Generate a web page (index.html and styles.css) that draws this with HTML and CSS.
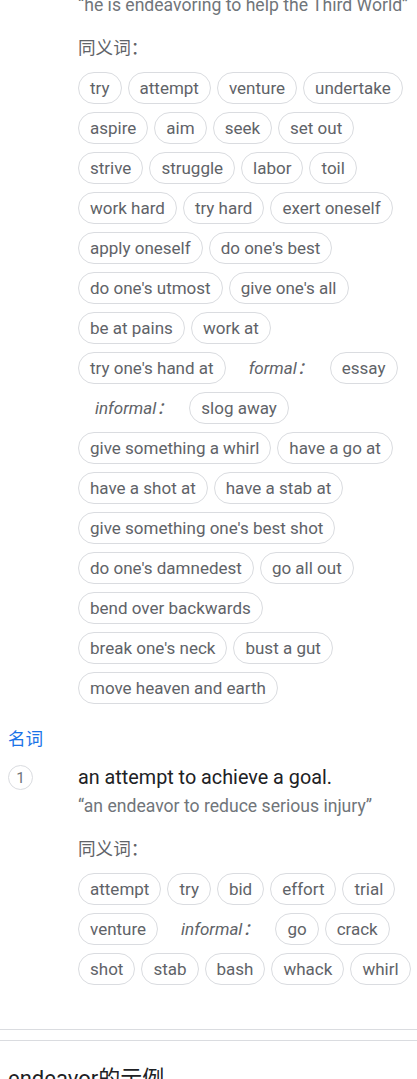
FILE: index.html
```html
<!DOCTYPE html>
<html lang="zh-CN">
<head>
<meta charset="utf-8">
<title>endeavor</title>
<link rel="stylesheet" href="styles.css">
</head>
<body>
<div class="page">
  <div class="sense sense-cont">
    <div class="num-col"></div>
    <div class="body-col">
      <div class="example">“he is endeavoring to help the Third World”</div>
      <div class="syn-label">同义词：</div>
      <div class="chips">
        <span class="chip">try</span>
        <span class="chip">attempt</span>
        <span class="chip">venture</span>
        <span class="chip">undertake</span>
        <span class="chip">aspire</span>
        <span class="chip">aim</span>
        <span class="chip">seek</span>
        <span class="chip">set out</span>
        <span class="chip">strive</span>
        <span class="chip">struggle</span>
        <span class="chip">labor</span>
        <span class="chip">toil</span>
        <span class="chip">work hard</span>
        <span class="chip">try hard</span>
        <span class="chip">exert oneself</span>
        <span class="chip">apply oneself</span>
        <span class="chip">do one's best</span>
        <span class="chip">do one's utmost</span>
        <span class="chip">give one's all</span>
        <span class="chip">be at pains</span>
        <span class="chip">work at</span>
        <span class="chip">try one's hand at</span>
        <span class="reg">formal：</span>
        <span class="chip">essay</span>
        <span class="reg">informal：</span>
        <span class="chip">slog away</span>
        <span class="chip">give something a whirl</span>
        <span class="chip">have a go at</span>
        <span class="chip">have a shot at</span>
        <span class="chip">have a stab at</span>
        <span class="chip">give something one's best shot</span>
        <span class="chip">do one's damnedest</span>
        <span class="chip">go all out</span>
        <span class="chip">bend over backwards</span>
        <span class="chip">break one's neck</span>
        <span class="chip">bust a gut</span>
        <span class="chip">move heaven and earth</span>
      </div>
    </div>
  </div>

  <div class="pos">名词</div>

  <div class="sense">
    <div class="num-col"><span class="num">1</span></div>
    <div class="body-col">
      <div class="definition">an attempt to achieve a goal.</div>
      <div class="example example-after-def">“an endeavor to reduce serious injury”</div>
      <div class="syn-label">同义词：</div>
      <div class="chips">
        <span class="chip">attempt</span>
        <span class="chip">try</span>
        <span class="chip">bid</span>
        <span class="chip">effort</span>
        <span class="chip">trial</span>
        <span class="chip">venture</span>
        <span class="reg">informal：</span>
        <span class="chip">go</span>
        <span class="chip">crack</span>
        <span class="chip">shot</span>
        <span class="chip">stab</span>
        <span class="chip">bash</span>
        <span class="chip">whack</span>
        <span class="chip">whirl</span>
      </div>
    </div>
  </div>

  <div class="divider divider-a"></div>
  <div class="divider divider-b"></div>

  <div class="examples-title">endeavor的示例</div>
</div>
</body>
</html>
```

FILE: styles.css
```css
html, body {
  margin: 0;
  padding: 0;
  background: #ffffff;
}

body {
  font-family: Roboto, "Noto Sans CJK SC", sans-serif;
  color: #202124;
  overflow: hidden;
}

.page {
  width: 417px;
  height: 1079px;
  overflow: hidden;
}

.sense {
  display: grid;
  grid-template-columns: 70px 1fr;
  padding-left: 8px;
}

.sense-cont {
  margin-top: -6px;
}

.num-col {
  display: flex;
  align-items: flex-start;
}

.num {
  box-sizing: border-box;
  width: 25px;
  height: 25px;
  border: 1px solid #dadce0;
  border-radius: 50%;
  display: flex;
  align-items: center;
  justify-content: center;
  font-size: 15.4px;
  color: #70757a;
}

.body-col {
  min-width: 0;
}

.definition {
  font-size: 19.8px;
  line-height: 26px;
  color: #202124;
}

.example {
  font-size: 17.6px;
  line-height: 22px;
  color: #70757a;
}

.example-after-def {
  margin-top: 4px;
}

.syn-label {
  font-size: 17.6px;
  line-height: 24px;
  color: #5f6368;
  margin-top: 20px;
  margin-bottom: 12px;
}

.chips {
  display: flex;
  flex-wrap: wrap;
  column-gap: 6px;
  row-gap: 8px;
}

.chip {
  box-sizing: border-box;
  height: 32px;
  padding: 0 11px;
  border: 1px solid #dadce0;
  border-radius: 16px;
  font-size: 17px;
  line-height: 30px;
  color: #5f6368;
  white-space: nowrap;
}

.reg {
  height: 32px;
  padding: 0 10px 0 17px;
  font-size: 17px;
  line-height: 32px;
  font-style: italic;
  color: #5f6368;
  white-space: nowrap;
}

.pos {
  margin-top: 24px;
  padding-left: 8px;
  font-size: 17.6px;
  line-height: 22px;
  color: #1a73e8;
  margin-bottom: 15px;
}

.divider {
  height: 1px;
  background: #dadce0;
}

.divider-a {
  margin-top: 44px;
}

.divider-b {
  margin-top: 10px;
}

.examples-title {
  margin-top: 24px;
  padding-left: 8px;
  font-size: 22px;
  line-height: 28px;
  color: #202124;
}
```
